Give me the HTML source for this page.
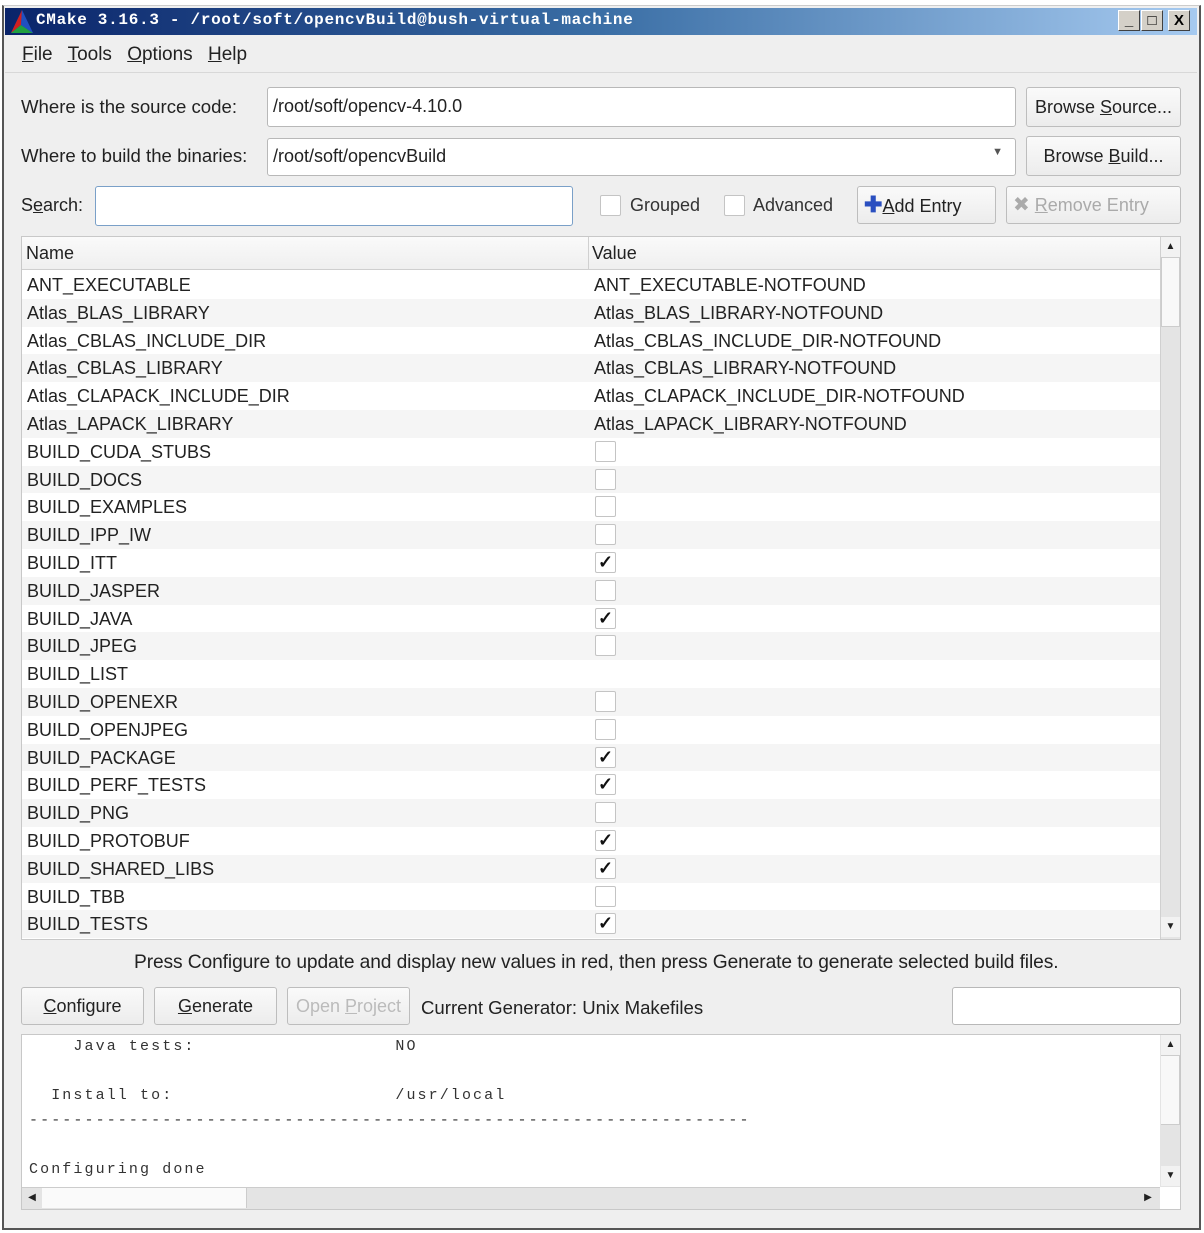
<!DOCTYPE html>
<html><head><meta charset="utf-8"><style>
*{box-sizing:border-box;margin:0;padding:0}
body{width:1204px;height:1233px;background:#fff;position:relative;overflow:hidden;font-family:"Liberation Sans",sans-serif;font-size:18px;color:#222}
.a{position:absolute}
.win{left:2px;top:5px;width:1199px;height:1225px;background:#efefef;border:2px solid #555;border-top:1px solid #ccc}
.title{left:5px;top:8px;width:1192px;height:27px;background:linear-gradient(90deg,#0a246a 0%,#3a6ea5 50%,#a6caf0 100%)}
.tt{left:36px;top:11px;color:#fff;font-family:"Liberation Mono",monospace;font-weight:bold;font-size:16px;letter-spacing:0.7px}
.tb{top:10px;width:22px;height:21px;background:#d4d0c8;border:1px solid;border-color:#fff #404040 #404040 #fff;font-size:15px;font-weight:bold;text-align:center;line-height:19px;color:#000}
.u{text-decoration:underline}
.in{background:#fff;border:1px solid #b8b8b8;border-radius:3px}
.btn{background:linear-gradient(#fafafa,#ececec);border:1px solid #bdbdbd;border-radius:3px;text-align:center}
.cb{width:21px;height:21px;background:#fff;border:1px solid #c4c4c4;border-radius:2px}
.row{left:22px;width:1138px;height:28px;line-height:28px}
.chk{position:absolute;left:573px;top:3px;width:21px;height:21px;background:#fff;border:1px solid #c4c4c4;border-radius:2px;font-size:18px;line-height:19px;text-align:center;font-weight:bold;color:#111}
.mono{font-family:"Liberation Mono",monospace;font-size:15px;letter-spacing:2.1px;color:#333}
</style></head><body>
<div class="a win"></div>
<div class="a title"></div>
<svg class="a" style="left:10px;top:9px" width="24" height="25" viewBox="0 0 24 25"><polygon points="12,1 1,24 23,24" fill="#1a3a9a"/><polygon points="12,1 1,24 11,16" fill="#d02020"/><polygon points="1,24 11,16 23,24" fill="#20a040"/><polygon points="12,1 11,16 23,24" fill="#2050c0"/></svg>
<div class="a tt">CMake 3.16.3 - /root/soft/opencvBuild@bush-virtual-machine</div>
<div class="a tb" style="left:1118px">_</div>
<div class="a tb" style="left:1141px">□</div>
<div class="a tb" style="left:1168px">X</div>

<div class="a" style="left:22px;top:44px;font-size:19px;word-spacing:10px"><span class="u">F</span>ile <span class="u">T</span>ools <span class="u">O</span>ptions <span class="u">H</span>elp</div>
<div class="a" style="left:5px;top:72px;width:1192px;border-top:1px solid #d8d8d8"></div>

<div class="a" style="left:21px;top:96px;font-size:18.6px">Where is the source code:</div>
<div class="a in" style="left:267px;top:87px;width:749px;height:40px;padding:8px 5px">/root/soft/opencv-4.10.0</div>
<div class="a btn" style="left:1026px;top:87px;width:155px;height:40px;line-height:38px">Browse <span class="u">S</span>ource...</div>

<div class="a" style="left:21px;top:145px;font-size:18.6px">Where to build the binaries:</div>
<div class="a in" style="left:267px;top:138px;width:749px;height:38px;padding:7px 5px">/root/soft/opencvBuild<span style="position:absolute;right:12px;top:7px;font-size:11px;color:#555">▼</span></div>
<div class="a btn" style="left:1026px;top:136px;width:155px;height:40px;line-height:38px">Browse <span class="u">B</span>uild...</div>

<div class="a" style="left:21px;top:195px">S<span class="u">e</span>arch:</div>
<div class="a in" style="left:95px;top:186px;width:478px;height:40px;border:1px solid #7aa0c8"></div>
<div class="a cb" style="left:600px;top:195px"></div><div class="a" style="left:630px;top:195px;color:#333">Grouped</div>
<div class="a cb" style="left:724px;top:195px"></div><div class="a" style="left:753px;top:195px;color:#333">Advanced</div>
<div class="a btn" style="left:857px;top:186px;width:139px;height:38px;line-height:36px;text-align:left;padding-left:6px"><span style="color:#2a4fc0;font-weight:bold;font-size:22px">✚</span><span class="u">A</span>dd Entry</div>
<div class="a btn" style="left:1006px;top:186px;width:175px;height:38px;line-height:36px;color:#aaa;text-align:left;padding-left:6px"><span style="font-size:20px">✖</span> <span class="u">R</span>emove Entry</div>

<div class="a" style="left:21px;top:236px;width:1160px;height:704px;background:#fff;border:1px solid #c8c8c8"></div>
<div class="a" style="left:22px;top:237px;width:1138px;height:33px;background:linear-gradient(#fafafa,#efefef);border-bottom:1px solid #cfcfcf"></div>
<div class="a" style="left:588px;top:237px;height:33px;border-left:1px solid #d0d0d0"></div>
<div class="a" style="left:26px;top:243px">Name</div>
<div class="a" style="left:592px;top:243px">Value</div>
<div class="a" style="left:1160px;top:237px;width:20px;height:702px;background:#e4e4e4;border-left:1px solid #d0d0d0"></div>
<div class="a" style="left:1161px;top:237px;width:19px;height:20px;background:#f2f2f2;font-size:10px;text-align:center;line-height:20px">▲</div>
<div class="a" style="left:1161px;top:257px;width:19px;height:70px;background:#f8f8f8;border:1px solid #ccc"></div>
<div class="a" style="left:1161px;top:917px;width:19px;height:20px;background:#f2f2f2;font-size:10px;text-align:center;line-height:20px">▼</div>

<div id="rows"></div>
<script>
var r=[["ANT_EXECUTABLE","ANT_EXECUTABLE-NOTFOUND"],["Atlas_BLAS_LIBRARY","Atlas_BLAS_LIBRARY-NOTFOUND"],["Atlas_CBLAS_INCLUDE_DIR","Atlas_CBLAS_INCLUDE_DIR-NOTFOUND"],["Atlas_CBLAS_LIBRARY","Atlas_CBLAS_LIBRARY-NOTFOUND"],["Atlas_CLAPACK_INCLUDE_DIR","Atlas_CLAPACK_INCLUDE_DIR-NOTFOUND"],["Atlas_LAPACK_LIBRARY","Atlas_LAPACK_LIBRARY-NOTFOUND"],["BUILD_CUDA_STUBS",0],["BUILD_DOCS",0],["BUILD_EXAMPLES",0],["BUILD_IPP_IW",0],["BUILD_ITT",1],["BUILD_JASPER",0],["BUILD_JAVA",1],["BUILD_JPEG",0],["BUILD_LIST",""],["BUILD_OPENEXR",0],["BUILD_OPENJPEG",0],["BUILD_PACKAGE",1],["BUILD_PERF_TESTS",1],["BUILD_PNG",0],["BUILD_PROTOBUF",1],["BUILD_SHARED_LIBS",1],["BUILD_TBB",0],["BUILD_TESTS",1]];
var h="";r.forEach(function(x,i){var t=271+i*27.8;var v=typeof x[1]=="number"?'<div class="chk">'+(x[1]?'✓':'')+'</div>':'<span style="position:absolute;left:572px">'+x[1]+'</span>';
h+='<div class="a row" style="top:'+t+'px;background:'+(i%2?'#f5f5f5':'#fff')+'"><span style="position:absolute;left:5px">'+x[0]+'</span>'+v+'</div>';});
document.getElementById("rows").innerHTML=h;
</script>

<div class="a" style="left:134px;top:952px;font-size:19.2px;letter-spacing:-0.1px">Press Configure to update and display new values in red, then press Generate to generate selected build files.</div>
<div class="a btn" style="left:21px;top:987px;width:123px;height:38px;line-height:36px"><span class="u">C</span>onfigure</div>
<div class="a btn" style="left:154px;top:987px;width:123px;height:38px;line-height:36px"><span class="u">G</span>enerate</div>
<div class="a btn" style="left:287px;top:987px;width:123px;height:38px;line-height:36px;color:#bbb">Open <span class="u">P</span>roject</div>
<div class="a" style="left:421px;top:997px;font-size:18.6px">Current Generator: Unix Makefiles</div>
<div class="a in" style="left:952px;top:987px;width:229px;height:38px"></div>

<div class="a" style="left:21px;top:1034px;width:1160px;height:176px;background:#fff;border:1px solid #c8c8c8"></div>
<div class="a mono" style="left:29px;top:1035px;line-height:24.5px;white-space:pre">    Java tests:                  NO

  Install to:                    /usr/local
-----------------------------------------------------------------

Configuring done</div>
<div class="a" style="left:1160px;top:1035px;width:20px;height:152px;background:#e4e4e4"></div>
<div class="a" style="left:1161px;top:1035px;width:19px;height:20px;background:#f2f2f2;font-size:10px;text-align:center;line-height:20px">▲</div>
<div class="a" style="left:1161px;top:1055px;width:19px;height:70px;background:#f8f8f8;border:1px solid #ccc;border-left:none"></div>
<div class="a" style="left:1161px;top:1166px;width:19px;height:20px;background:#f2f2f2;font-size:10px;text-align:center;line-height:20px">▼</div>
<div class="a" style="left:22px;top:1187px;width:1138px;height:22px;background:#e4e4e4;border-top:1px solid #ccc"></div>
<div class="a" style="left:22px;top:1187px;width:20px;height:22px;font-size:10px;line-height:22px;text-align:center">◀</div>
<div class="a" style="left:42px;top:1188px;width:205px;height:20px;background:#fafafa;border-right:1px solid #ccc"></div>
<div class="a" style="left:1138px;top:1187px;width:20px;height:22px;font-size:10px;line-height:22px;text-align:center">▶</div>
</body></html>
